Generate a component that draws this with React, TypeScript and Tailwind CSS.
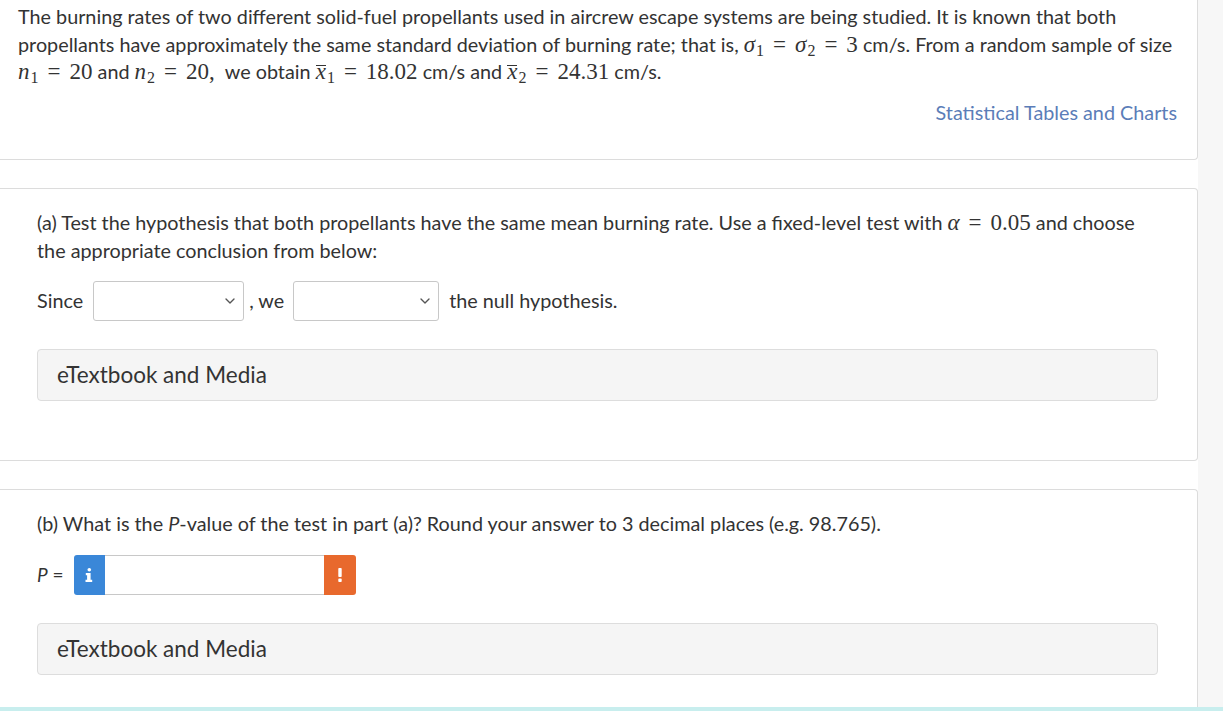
import React from 'react';
import { ChevronDown } from 'lucide-react';

const serif = "font-['Liberation_Serif',serif]";

// italic math variable with optional upright subscript
function V({ c, sub, bar }: { c: string; sub?: string; bar?: boolean }) {
  return (
    <span className={`${serif} text-[23px] leading-[10px]`}>
      {bar ? (
        <span className="inline-block italic border-t border-[#333] leading-[0.55em]">{c}</span>
      ) : (
        <span className="italic">{c}</span>
      )}
      {sub && <span className="text-[16px] align-[-4px] ml-[1px]">{sub}</span>}
    </span>
  );
}

function Eq() {
  return <span className={`${serif} text-[23px] leading-[10px] mx-[9px]`}>=</span>;
}

function Num({ children }: { children: React.ReactNode }) {
  return <span className={`${serif} text-[23px] leading-[10px]`}>{children}</span>;
}

function Select({ width }: { width: string }) {
  return (
    <div className={`${width} h-[40px] bg-white border border-[#c8c8c8] rounded-[3px] flex items-center justify-end pr-[5px]`}>
      <ChevronDown size={16} strokeWidth={2} className="text-[#555]" />
    </div>
  );
}

function MediaBox() {
  return (
    <div className="h-[52px] bg-[#f5f5f5] border border-[#dddddd] rounded-[4px] flex items-center pl-[19px] text-[22.5px] text-[#333]">
      eTextbook and Media
    </div>
  );
}

export default function App() {
  return (
    <div className="h-[711px] w-full overflow-hidden flex flex-col bg-white font-['Lato',sans-serif] text-[#333]">
      <div className="flex flex-1 min-h-0">
        <main className="w-[1198px] shrink-0 flex flex-col">
          {/* Problem statement */}
          <section className="border-b border-r border-[#dcdcdc] rounded-br-[4px] pl-[18px] pr-[20px] pt-[3px] pb-[33px] text-[19.8px] leading-[27.5px]">
            <p className="whitespace-nowrap">
              The burning rates of two different solid-fuel propellants used in aircrew escape systems are being studied. It is known that both
              <br />
              propellants have approximately the same standard deviation of burning rate; that is, <V c="σ" sub="1" />
              <Eq />
              <V c="σ" sub="2" />
              <Eq />
              <Num>3</Num> cm/s. From a random sample of size
              <br />
              <V c="n" sub="1" />
              <Eq />
              <Num>20</Num> and <V c="n" sub="2" />
              <Eq />
              <Num>20,</Num>
              <span className="ml-[10px]">we obtain </span>
              <V c="x" sub="1" bar />
              <Eq />
              <Num>18.02</Num> cm/s and <V c="x" sub="2" bar />
              <Eq />
              <Num>24.31</Num> cm/s.
            </p>
            <div className="mt-[13px] text-right text-[#5b7db8]">Statistical Tables and Charts</div>
          </section>

          {/* Part (a) */}
          <section className="mt-[28px] border-y border-r border-[#dcdcdc] rounded-r-[4px] pl-[37px] pr-[39px] pt-[20px] pb-[59px] text-[19.8px] leading-[27.5px]">
            <p className="whitespace-nowrap">
              (a) Test the hypothesis that both propellants have the same mean burning rate. Use a fixed-level test with <V c="α" />
              <Eq />
              <Num>0.05</Num> and choose
              <br />
              the appropriate conclusion from below:
            </p>
            <div className="mt-[17px] flex items-center">
              <span>Since</span>
              <div className="ml-[10px]">
                <Select width="w-[151px]" />
              </div>
              <span className="ml-[5px]">, we</span>
              <div className="ml-[9px]">
                <Select width="w-[146px]" />
              </div>
              <span className="ml-[10px]">the null hypothesis.</span>
            </div>
            <div className="mt-[28px]">
              <MediaBox />
            </div>
          </section>

          {/* Part (b) */}
          <section className="mt-[28px] flex-1 border-t border-r border-[#dcdcdc] rounded-tr-[4px] pl-[37px] pr-[39px] pt-[20px] text-[19.8px] leading-[27.5px]">
            <p className="whitespace-nowrap">
              (b) What is the <span className="italic">P</span>-value of the test in part (a)? Round your answer to 3 decimal places (e.g. 98.765).
            </p>
            <div className="mt-[17px] flex items-center">
              <span className="text-[19px]">
                <span className="italic">P</span> =
              </span>
              <div className="ml-[10px] flex h-[40px]">
                <div className="w-[31px] bg-[#3a87d8] rounded-l-[3px] flex items-center justify-center">
                  <svg width="8" height="14" viewBox="0 0 8 14" fill="white">
                    <circle cx="4.3" cy="1.8" r="1.8" />
                    <path d="M0.8 5 H5.6 V11.8 H7.2 V14 H0.5 V11.8 H2.1 V7.2 H0.8 Z" />
                  </svg>
                </div>
                <div className="w-[219px] bg-white border-y border-[#c8c8c8]" />
                <div className="w-[32px] bg-[#e8692d] rounded-r-[3px] flex items-center justify-center">
                  <svg width="4" height="14" viewBox="0 0 4 14" fill="white">
                    <rect x="0.3" y="0" width="3.4" height="9" rx="0.8" />
                    <rect x="0.3" y="10.6" width="3.4" height="3.4" rx="0.8" />
                  </svg>
                </div>
              </div>
            </div>
            <div className="mt-[28px]">
              <MediaBox />
            </div>
          </section>
        </main>
        <aside className="flex-1 bg-[#f7f7f7]" />
      </div>
      <div className="h-[4px] shrink-0 bg-[#c8eeee]" />
    </div>
  );
}
